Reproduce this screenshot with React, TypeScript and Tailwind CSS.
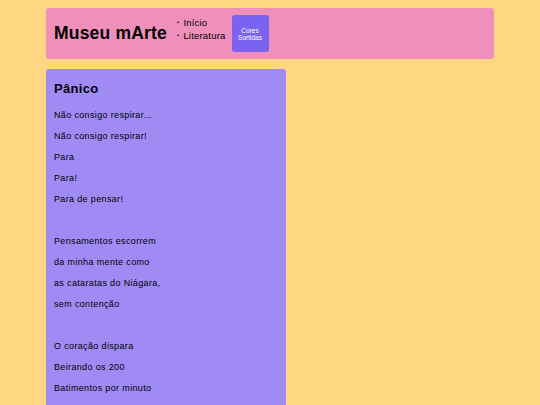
export default function App() {
  const lines: string[] = [
    "Não consigo respirar...",
    "Não consigo respirar!",
    "Para",
    "Para!",
    "Para de pensar!",
    "",
    "Pensamentos escorrem",
    "da minha mente como",
    "as cataratas do Niágara,",
    "sem contenção",
    "",
    "O coração dispara",
    "Beirando os 200",
    "Batimentos por minuto",
    "",
    "",
  ];
  return (
    <div
      className="h-[405px] w-[540px] overflow-hidden bg-[#ffd782] pt-[8px] pl-[46px]"
      style={{ fontFamily: '"Comic Sans MS", "Liberation Sans", sans-serif' }}
    >
      <header className="flex h-[51px] w-[448px] items-center rounded-[3px] bg-[#ee90bb] pl-[8px]">
        <h1 className="text-[17.5px] font-bold tracking-[0.2px] text-black">Museu mArte</h1>
        <ul className="ml-[10px] -mt-[9px] flex flex-col text-[9.5px] leading-[13px] tracking-[0.2px] text-black">
          <li className="flex items-center gap-[4px]">
            <span className="text-[6px]">•</span>Início
          </li>
          <li className="flex items-center gap-[4px]">
            <span className="text-[6px]">•</span>Literatura
          </li>
        </ul>
        <button className="ml-[6px] flex h-[37px] w-[37px] flex-col items-center justify-center rounded-[3px] bg-[#7b62f0] text-[6.5px] leading-[7px] text-white">
          <span>Cores</span>
          <span>Sortidas</span>
        </button>
      </header>
      <main className="mt-[10px] w-[240px] rounded-t-[3px] bg-[#a08bf5] px-[8px] pt-[10px]">
        <h2 className="text-[13px] font-bold leading-[20px] tracking-[0.3px] text-black">Pânico</h2>
        <div className="mt-[6px] flex flex-col">
          {lines.map((l, i) => (
            <p key={i} className="h-[21px] text-[9px] leading-[21px] tracking-[0.35px] text-black">
              {l}
            </p>
          ))}
        </div>
      </main>
    </div>
  );
}
